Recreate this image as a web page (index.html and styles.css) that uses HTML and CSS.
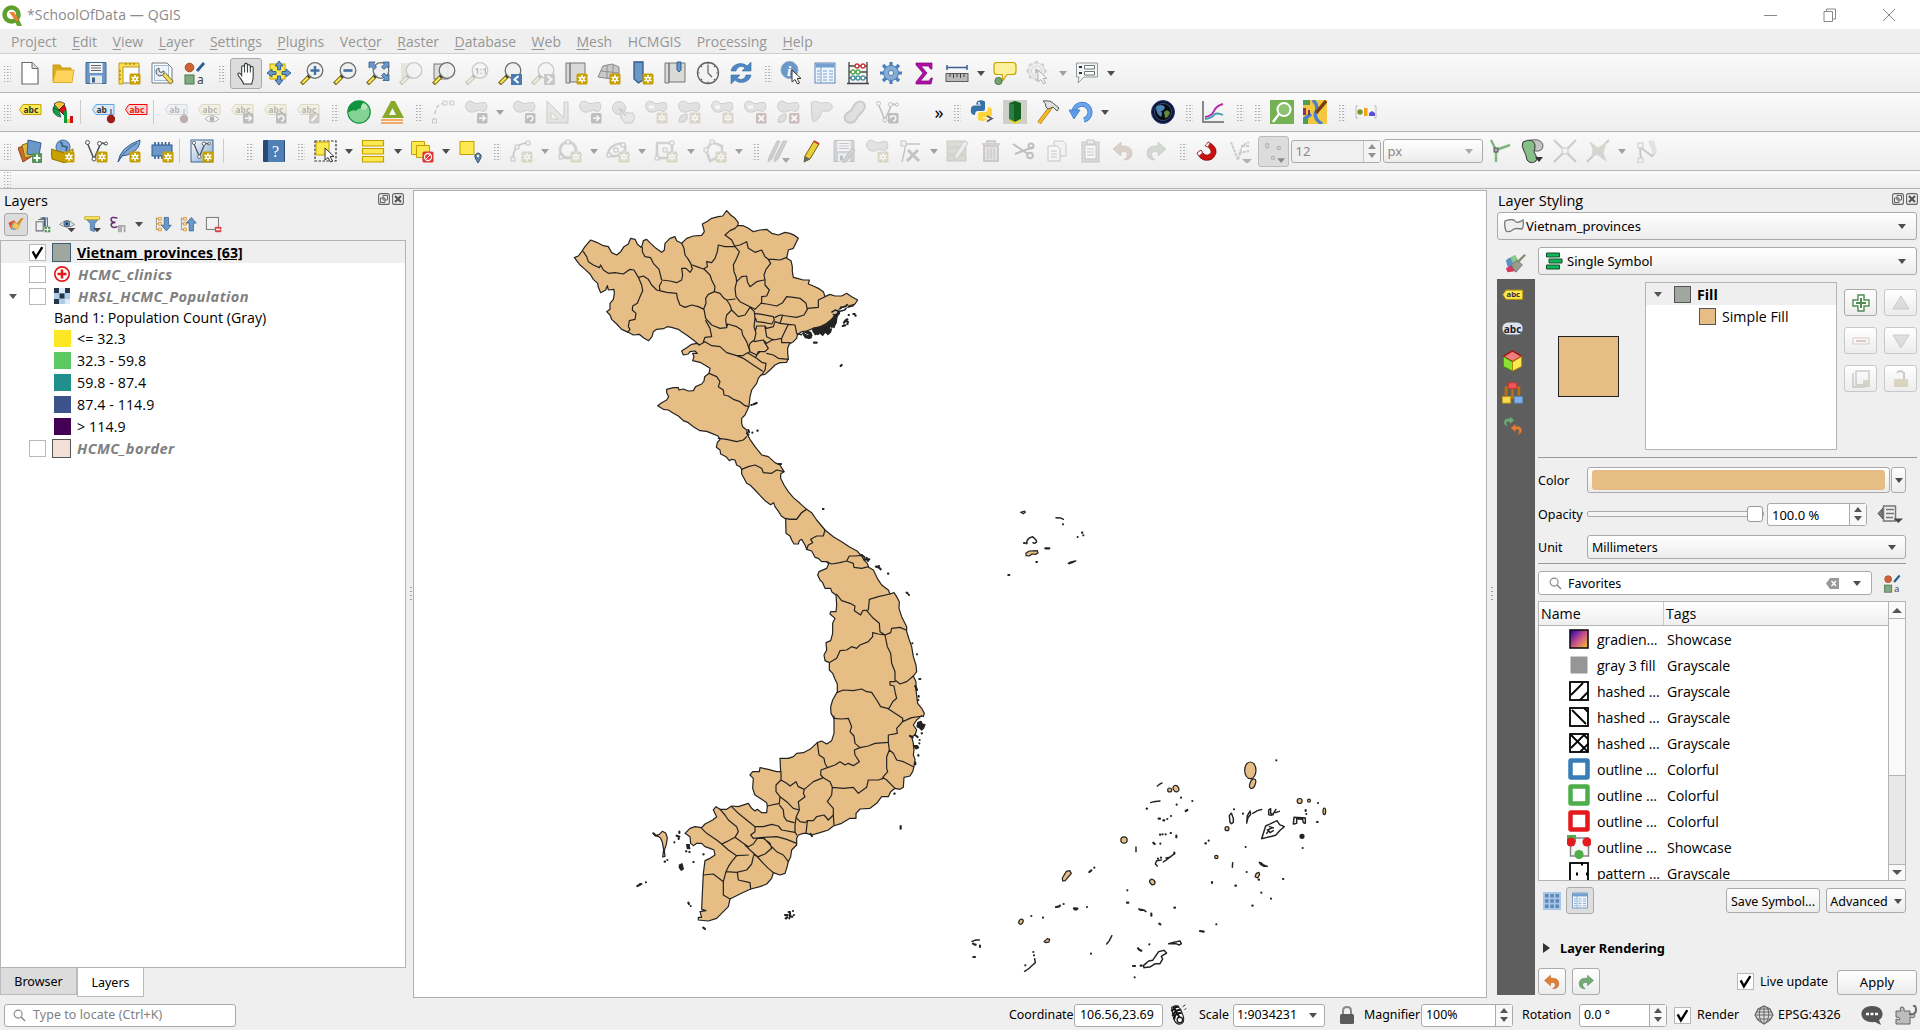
FILE: index.html
```html
<!DOCTYPE html>
<html lang="en">
<head>
<meta charset="utf-8">
<title>*SchoolOfData — QGIS</title>
<link rel="stylesheet" href="styles.css">
</head>
<body>
<svg class="grads" aria-hidden="true">
<defs>
<linearGradient id="gSteel" x1="0" y1="0" x2="1" y2="1"><stop offset="0" stop-color="#fff"/><stop offset="1" stop-color="#7fa6cf"/></linearGradient>
<linearGradient id="gMagma" x1="0" y1="0" x2="1" y2="1"><stop offset=".1" stop-color="#3a0ca8"/><stop offset=".5" stop-color="#c8508a"/><stop offset="1" stop-color="#fdc328"/></linearGradient>
</defs>
</svg>
<svg class="defs" aria-hidden="true">
<symbol id="badge" viewBox="0 0 24 24"><rect x="12.500" y="12.500" width="11" height="11" rx="1.500" fill="#c4a000"/><path d="M18 14v8M14.500 16l7 4M14.500 20l7-4" stroke="#fff" stroke-width="1.500"/><circle cx="18" cy="18" r="2.300" fill="#fff"/><circle cx="18" cy="18" r="1" fill="#c4a000"/></symbol>
<symbol id="xb" viewBox="0 0 24 24"><rect x="13" y="13" width="10.500" height="10.500" rx="1.500" fill="#d33a3a"/><path d="M15.500 15.500l5.500 5.500M21 15.500l-5.500 5.500" stroke="#fff" stroke-width="2"/></symbol>
<symbol id="gb" viewBox="0 0 24 24"><rect x="13" y="13" width="10.500" height="10.500" rx="1.500" fill="#555"/><path d="M15 18.200h6M18.500 15.500l2.700 2.700-2.700 2.700" stroke="#fff" stroke-width="1.600" fill="none"/></symbol>
<symbol id="rb" viewBox="0 0 24 24"><rect x="13" y="13" width="10.500" height="10.500" rx="1.500" fill="#555"/><path d="M16 17a2.600 2.600 0 1 1 2 4M15.500 18.500v-3" stroke="#fff" stroke-width="1.500" fill="none"/></symbol>
<symbol id="lens" viewBox="0 0 24 24"><path d="M9.500 15L1.500 23" stroke="#7a6a1c" stroke-width="4"/><path d="M8 16.500L2.500 22" stroke="#fce94f" stroke-width="2.200"/><path d="M10.500 13.500l-2 2.500" stroke="#222" stroke-width="3"/><circle cx="15" cy="9.500" r="7.800" fill="#eef1f1" fill-opacity=".9" stroke="#6c6f6f" stroke-width="1.300"/></symbol>
<symbol id="new" viewBox="0 0 24 24"><path d="M4 1.500h10l6 6v15.500H4z" fill="#fff" stroke="#6a6c6a" stroke-width="1.200"/><path d="M14 1.500v6h6" fill="#ddd" stroke="#6a6c6a"/></symbol>
<symbol id="open" viewBox="0 0 24 24"><path d="M2 20V4h7l2 3h9v3H5z" fill="#d9a91c" stroke="#c79a11"/><path d="M5 9h18l-2 12.500H2z" fill="#ffd45a" stroke="#e0ae25"/></symbol>
<symbol id="save" viewBox="0 0 24 24"><path d="M2 1.500h20v21H2z" fill="#6b98c8" stroke="#44698f"/><rect x="5.500" y="2" width="13" height="10" fill="#f4f6f4"/><path d="M7 4.500h10M7 7h10M7 9.500h10" stroke="#666"/><rect x="6" y="14.500" width="12" height="8" fill="#e6e9ea"/><rect x="8" y="16.500" width="3" height="5" fill="#3f618b"/></symbol>
<symbol id="layout" viewBox="0 0 24 24"><rect x="4" y="5" width="18" height="17" fill="#fff" stroke="#7a7f86"/><path d="M2 2h20v4H6v17H2z" fill="#fbdc54" stroke="#c09c16"/><path d="M9 2v2M13 2v2M17 2v2M2 10h2M2 14h2M2 18h2" stroke="#8c7010"/><use href="#badge"/></symbol>
<symbol id="lman" viewBox="0 0 24 24"><path d="M2 2h15l5 5v15H2z" fill="#fff" stroke="#777"/><rect x="4.500" y="4.500" width="14" height="15" fill="#f0f5fc" stroke="#9fbce0"/><path d="M14 13l8 9" stroke="#77691c" stroke-width="4.500"/><path d="M14 13l7.500 8.500" stroke="#f6dd60" stroke-width="3"/><path d="M9 7a4 4 0 1 0 5 3l-3 1.500-2-1.500z" fill="#ddd" stroke="#555"/></symbol>
<symbol id="style" viewBox="0 0 24 24"><circle cx="6.500" cy="6.500" r="4.300" fill="#cf6238" stroke="#a84c28"/><rect x="2" y="14" width="9" height="9" fill="#82aa82" stroke="#47764a"/><path d="M14 10l7-8" stroke="#2c5c94" stroke-width="2.800"/><text x="14" y="23" font-size="12" font-family="Noto Sans" fill="#444">a</text></symbol>
<symbol id="pan" viewBox="0 0 24 24"><path d="M7.500 14V5a1.600 1.600 0 0 1 3 0V2.500a1.600 1.600 0 0 1 3 0V4a1.600 1.600 0 0 1 3 0v2a1.500 1.500 0 0 1 3 .5V15c0 4-1 4.500-1.500 8H9.500c-.5-3-4-6-6-10 0-2 2-2.500 4 1z" fill="#fff" stroke="#2e3436" stroke-width="1.100"/><path d="M10.500 5v6M13.500 4v7M16.500 5v6" stroke="#2e3436"/></symbol>
<symbol id="panto" viewBox="0 0 24 24"><rect x="3" y="3" width="15" height="15" fill="#fce94f" stroke="#c4a000"/><path d="M12 0l4 5h-2.500v4h-3V5H8zM12 24l4-5h-2.500v-4h-3v4H8zM0 12l5-4v2.500h4v3H5V16zM24 12l-5-4v2.500h-4v3h4V16z" fill="#6b98c8" stroke="#2b5a8c" stroke-width=".9"/></symbol>
<symbol id="zin" viewBox="0 0 24 24"><use href="#lens"/><path d="M15 5v9M10.500 9.500h9" stroke="#44719f" stroke-width="2.400"/></symbol>
<symbol id="zout" viewBox="0 0 24 24"><use href="#lens"/><path d="M10.500 9.500h9" stroke="#44719f" stroke-width="2.600"/></symbol>
<symbol id="zfull" viewBox="0 0 24 24"><use href="#lens"/><path d="M3 1h6L7.500 3l3 3-2.500 2.500-3-3L3 7zM23 1h-6l1.500 2-3 3L18 8.500l3-3L23 7zM23 19.500h-6l1.500-2-3-3 2.500-2.500 3 3 2-1.500z" fill="#6b98c8" stroke="#2b5a8c" stroke-width=".8"/></symbol>
<symbol id="zsel" viewBox="0 0 24 24"><rect x="2" y="2" width="14" height="16" fill="#d8c46a"/><use href="#lens"/></symbol>
<symbol id="zlay" viewBox="0 0 24 24"><rect x="2" y="3" width="14" height="15" fill="#ddd" stroke="#777"/><use href="#lens"/></symbol>
<symbol id="z11" viewBox="0 0 24 24"><use href="#lens"/><text x="9.500" y="13" font-size="9" font-weight="bold" font-family="Noto Sans" fill="#444">1:1</text></symbol>
<symbol id="zlast" viewBox="0 0 24 24"><use href="#lens"/><rect x="13" y="13" width="11" height="11" fill="#4a7ab0"/><path d="M20.500 15l-4 3.500 4 3.500" stroke="#fff" stroke-width="2" fill="none"/></symbol>
<symbol id="znext" viewBox="0 0 24 24"><use href="#lens"/><rect x="13" y="13" width="11" height="11" fill="#777"/><path d="M16.500 15l4 3.500-4 3.500" stroke="#fff" stroke-width="2" fill="none"/></symbol>
<symbol id="nmap" viewBox="0 0 24 24"><path d="M2 2h4v20H2zM6 2h15v19H6z" fill="#d9dad8" stroke="#777"/><use href="#badge"/></symbol>
<symbol id="n3d" viewBox="0 0 24 24"><path d="M6 5l9-2 7 3v13L1 16z" fill="#c9cac8" stroke="#888"/><path d="M4 10l18 2M10 4v13M16 4v14" stroke="#909290" fill="none"/><use href="#badge"/></symbol>
<symbol id="bkn" viewBox="0 0 24 24"><path d="M4 1h9v18l-4.500 3L4 18z" fill="#6b98c8" stroke="#2b5a8c" stroke-width="1.300"/><use href="#badge"/></symbol>
<symbol id="bks" viewBox="0 0 24 24"><path d="M2 2h4v20H2zM6 2h16v19H6z" fill="#d9dad8" stroke="#777"/><path d="M14 1h4v8l-2 2-2-2z" fill="#6b98c8" stroke="#2b5a8c"/></symbol>
<symbol id="clock" viewBox="0 0 24 24"><circle cx="12" cy="12" r="10.500" fill="#f3f3f2" stroke="#5e6264" stroke-width="1.300"/><path d="M12 4v8l4 4M12 2v1.500M12 20.500V22M2 12h1.500M20.500 12H22M5 5l1 1M19 5l-1 1M5 19l1-1M19 19l-1-1" stroke="#5e6264" fill="none" stroke-width="1.200"/></symbol>
<symbol id="refresh" viewBox="0 0 24 24"><path d="M2 10C3 3 13 0 18 5l4-4v9h-9l3-3C12 4 8 6 7 10zM22 14c-1 7-11 10-16 5l-4 4v-9h9l-3 3c4 3 8 1 9-3z" fill="#4f87c2" stroke="#3b6da4" stroke-width=".6"/></symbol>
<symbol id="cursor" viewBox="0 0 24 24"><path d="M12 9v12l3-2.500 2.500 4.500 2-1-2.300-4.500H21z" fill="#fff" stroke="#333"/></symbol>
<symbol id="ident" viewBox="0 0 24 24"><circle cx="9.500" cy="9" r="8.500" fill="#6b98c8" stroke="#8aa9cb"/><text x="7" y="15" font-size="15" font-weight="bold" font-style="italic" font-family="Liberation Serif" fill="#fff">i</text><use href="#cursor"/></symbol>
<symbol id="table" viewBox="0 0 24 24"><rect x="2" y="2" width="20" height="20" fill="#eef4fb" stroke="#5d86b4"/><path d="M2.500 2.500h19v4h-19z" fill="#74a0d0"/><path d="M8 2v20M4 10h3M10 10h4M16 10h4M4 13h3M10 13h4M16 13h4M4 16h3M10 16h4M16 16h4M4 19h3M10 19h4M16 19h4" stroke="#74a0d0"/></symbol>
<symbol id="abacus" viewBox="0 0 24 24"><path d="M3 1v21M21 1v21M3 5h18M3 11h18M3 17h18M1 22.500h22" stroke="#444" stroke-width="1.300"/><g stroke-width="1.300" fill="#fff"><g stroke="#d03030"><circle cx="11" cy="5" r="2"/><circle cx="17" cy="5" r="2"/></g><g stroke="#4faa4f"><circle cx="7" cy="11" r="2"/><circle cx="12" cy="11" r="2"/></g><g stroke="#44909f"><circle cx="7" cy="17" r="2"/><circle cx="12" cy="17" r="2"/><circle cx="17" cy="17" r="2"/></g></g></symbol>
<symbol id="gear" viewBox="0 0 24 24"><path d="M12 1v22M1 12h22M4 4l16 16M20 4L4 20" stroke="#4b7fb8" stroke-width="3.200"/><circle cx="12" cy="12" r="7.500" fill="#86abd5" stroke="#4b7fb8"/><circle cx="12" cy="12" r="2.600" fill="#f5f5f5" stroke="#4b7fb8"/></symbol>
<symbol id="sigma" viewBox="0 0 24 24"><path d="M4 2h16v6h-1.500l-2-3H9l6 7-6.500 8H17l2-3h1.500L19 23H4v-2l7-9-7-8z" fill="#b40cab" stroke="#75086f" stroke-width=".7"/></symbol>
<symbol id="ruler" viewBox="0 0 24 24"><path d="M2 6.500h20M2 4v5M22 4v5" stroke="#3a618f" stroke-width="1.500"/><rect x="1" y="12.500" width="22" height="8" fill="#b9bab8" stroke="#5e6060"/><path d="M5 12v4M8.500 12v5M12 12v4M15.500 12v5M19 12v4" stroke="#444"/></symbol>
<symbol id="tip" viewBox="0 0 24 24"><path d="M4 1.500h16q3 0 3 3v6q0 3-3 3h-6l-4 6-1-6H4q-3 0-3-3v-6q0-3 3-3z" fill="#fdf09a" stroke="#c4a000" stroke-width="1.200"/><circle cx="5.500" cy="20" r="3.600" fill="#73a473" stroke="#467946"/></symbol>
<symbol id="act" viewBox="0 0 24 24"><path d="M10.500 0v20M.5 10h20M3.500 3l14 14M17.500 3l-14 14" stroke="#888" stroke-width="3.500"/><circle cx="10.500" cy="10" r="8" fill="#e4e4e4" stroke="#888"/><circle cx="10.500" cy="10" r="5" fill="#f4f4f4" stroke="#888"/><path d="M9 7l5 3-5 3z" fill="#555"/><use href="#cursor"/></symbol>
<symbol id="form" viewBox="0 0 24 24"><path d="M1.500 2h21v14H9l-6 6 1-6H1.500z" fill="#f2f5f5" stroke="#929a9c"/><path d="M4 6h3M4 12h3" stroke="#333" stroke-width="2"/><path d="M9.500 4.500h10v3.500h-10zM9.500 10.500h10V14h-10z" fill="#fff" stroke="#6d7577"/></symbol>
<symbol id="abc" viewBox="0 0 24 24"><path d="M5 4.500h18v10H5L1.500 9.500z" fill="#fce94f" stroke="#c4a000"/><text x="5.500" y="12.500" font-size="8.500" font-weight="bold" font-family="Noto Sans" fill="#333">abc</text></symbol>
<symbol id="abcr" viewBox="0 0 24 24"><path d="M5 4.500h18v10H5L1.500 9.500z" fill="#f7d4d4" stroke="#f00"/><text x="5.500" y="12.500" font-size="8.500" font-weight="bold" font-family="Noto Sans" fill="#e22">abc</text></symbol>
<symbol id="abpin" viewBox="0 0 24 24"><path d="M5 4.500h18v10H5L1.500 9.500z" fill="#d9e9f8" stroke="#62a5e4"/><text x="5.500" y="12.500" font-size="8.500" font-weight="bold" font-family="Noto Sans" fill="#333">ab</text><path d="M20 9v8" stroke="#889" stroke-width="2"/><circle cx="20" cy="19" r="4.200" fill="#9e1b1b"/></symbol>
<symbol id="abceye" viewBox="0 0 24 24"><use href="#abc"/><path d="M8 19q7-7 14 0-7 6-14 0z" fill="#fff" stroke="#444"/><circle cx="15" cy="19" r="2.400" fill="#333"/></symbol>
<symbol id="abcmove" viewBox="0 0 24 24"><use href="#abc"/><use href="#gb"/></symbol>
<symbol id="abcrot" viewBox="0 0 24 24"><use href="#abc"/><use href="#rb"/></symbol>
<symbol id="abced" viewBox="0 0 24 24"><use href="#abc"/><rect x="13" y="13" width="10.500" height="10.500" rx="1.500" fill="#8a8050"/><path d="M15.500 21l5-5.500" stroke="#fff" stroke-width="2"/></symbol>
<symbol id="pie" viewBox="0 0 24 24"><path d="M8 10V2A8 8 0 0 0 3 13z" fill="#16a045" stroke="#144"/><path d="M8 10L3 4a8 8 0 0 1 11 0z" fill="#fcc53c" stroke="#553"/><path d="M8 10l5-5a8 8 0 0 1 0 10z" fill="#d11" stroke="#422"/><path d="M2 8l6 2 2 7a8 8 0 0 1-8-9z" fill="#16a045" stroke="#144" stroke-width=".6"/><path d="M13 11h3v12h-3z" fill="#0a9a3a"/><path d="M16 19h3v4h-3z" fill="#fb3"/><path d="M19 16h3v7h-3z" fill="#c11"/></symbol>
<symbol id="ball" viewBox="0 0 24 24"><circle cx="12" cy="12" r="11.200" fill="#85d295" stroke="#169142" stroke-width="1.200"/><path d="M1 12C1 3 10-1 17 2c-3 1-1 5-3 6s-4 1-5 3c-3-2-5 1-8 1z" fill="#10923e"/><circle cx="17" cy="7" r="3" fill="#b5e7bd"/></symbol>
<symbol id="tri" viewBox="0 0 24 24"><path d="M11 1h4l9 17H2z" fill="#88a92a"/><path d="M12.500 8l3.500 7H9z" fill="#f5f5f5"/><path d="M1 20h22M1 23h22" stroke="#f5923a" stroke-width="1.600"/></symbol>
<symbol id="blob" viewBox="0 0 24 24"><path d="M2 8C0 2 6-1 10 3c4 2 8-2 12 0 2 4 0 10-4 8-5-2-7 2-11 1C4 12 3 10 2 8z" fill="#b9bcb9" stroke="#777"/></symbol>
<symbol id="bmv" viewBox="0 0 24 24"><use href="#blob"/><use href="#gb"/></symbol>
<symbol id="brot" viewBox="0 0 24 24"><use href="#blob"/><use href="#rb"/></symbol>
<symbol id="badd" viewBox="0 0 24 24"><use href="#blob"/><path d="M5 7h5" stroke="#fff" stroke-width="3"/><use href="#badge"/></symbol>
<symbol id="bpart" viewBox="0 0 24 24"><use href="#blob"/><path d="M2 22q0-8 8-8v5q-2 4-8 3z" fill="#b9bcb9" stroke="#777"/><use href="#badge"/></symbol>
<symbol id="bdel" viewBox="0 0 24 24"><use href="#blob"/><path d="M5 7h5" stroke="#fff" stroke-width="3"/><use href="#xb"/></symbol>
<symbol id="bpdel" viewBox="0 0 24 24"><use href="#blob"/><path d="M2 22q0-8 8-8v5q-2 4-8 3z" fill="#b9bcb9" stroke="#777"/><use href="#xb"/></symbol>
<symbol id="resh" viewBox="0 0 24 24"><path d="M2 3c5-4 8 1 12 0s8-1 9 3-4 6-8 5c-4 0-2 4-5 7s-6 6-7 0z" fill="#b9bcb9" stroke="#777"/></symbol>
<symbol id="offc" viewBox="0 0 24 24"><path d="M14 3c5-4 11 1 8 6-2 5-5 4-7 9s-8 6-11 3 0-8 3-9 4-6 7-9z" fill="#b9bcb9" stroke="#777" stroke-width="2"/></symbol>
<symbol id="simp" viewBox="0 0 24 24"><circle cx="8" cy="8" r="6.500" fill="#b9bcb9" stroke="#777"/><path d="M10 9l6 4h6l2 5-3 5h-7l-4-5z" fill="#ccd2d6" stroke="#778" stroke-width="1"/><path d="M8 8l7 8" stroke="#444"/></symbol>
<symbol id="sq" viewBox="0 0 24 24"><path d="M2 1v22h21V2h-4v16z" fill="#d5c9a9" stroke="#777"/><path d="M6 12v7h7z" fill="#f4f4f4" stroke="#888"/></symbol>
<symbol id="adv" viewBox="0 0 24 24"><path d="M3 22v-4M4 14q1-10 10-11M18 3h4" stroke="#777" stroke-width="1.500" stroke-dasharray="4 2" fill="none"/><path d="M1.500 19h4v4h-4zM12 1h4v4h-4zM19 1h4v4h-4z" fill="#eee" stroke="#777"/></symbol>
<symbol id="vee" viewBox="0 0 24 24"><path d="M3.500 4.500L10 20l6-14q3-4 5 0" stroke="#4a5558" stroke-width="1.500" fill="none"/><g fill="#fff" stroke="#4a5558"><circle cx="3.500" cy="3.500" r="2"/><circle cx="10" cy="20" r="2"/><circle cx="15.500" cy="4.500" r="2"/><circle cx="22" cy="4.500" r="1.500"/></g></symbol>
<symbol id="nvec" viewBox="0 0 24 24"><use href="#vee"/><use href="#badge"/></symbol>
<symbol id="vmix" viewBox="0 0 24 24"><use href="#vee"/><use href="#rb"/></symbol>
<symbol id="py" viewBox="0 0 24 24"><path d="M7 1.500q4-2.500 8 0V9q0 2-2 2H8q-3 0-3 4-5 0-4-6 0-3 3-3.500h7V4.500H6z" fill="#3572a5"/><path d="M16 20q-4 2.500-8-.5V14q0-2 2-2h5q3 0 3-5 5 0 4 6 0 4-3 4h-6v1.500h4z" fill="#ffd43b"/><circle cx="9" cy="3" r="1" fill="#fff"/><path d="M17 16l5 2.500-5 3" stroke="#555" stroke-width="1.500" fill="none"/></symbol>
<symbol id="gcube" viewBox="0 0 24 24"><rect x="0" y="0" width="24" height="24" fill="#ccd0c8"/><path d="M6 3l6-2 6 2v16l-6 3-6-3z" fill="#14611f"/><path d="M6 3l5 1.500v17L6 19z" fill="#2a8048"/><path d="M6 19l6 3 6-3v2l-6 3-6-3z" fill="#e7d030"/></symbol>
<symbol id="hammer" viewBox="0 0 24 24"><path d="M15 7L3 23" stroke="#b8790c" stroke-width="4"/><path d="M15 7L3 23" stroke="#f4bc2c" stroke-width="2.600"/><path d="M7 1q8-1 11 3l5 4-2 3-4-4-5 2-2-2q0-4-3-6z" fill="#e0e0e0" stroke="#555"/></symbol>
<symbol id="undob" viewBox="0 0 24 24"><path d="M5 12A8 8 0 1 1 15 20" stroke="#3d77c8" stroke-width="5" fill="none"/><path d="M5 12A8 8 0 1 1 15 20" stroke="#6aa6ee" stroke-width="3.600" fill="none"/><path d="M0 10h11l-6 9z" fill="#5b9be8" stroke="#3d77c8" stroke-width=".8"/></symbol>
<symbol id="earth" viewBox="0 0 24 24"><circle cx="12" cy="12" r="11.500" fill="#0d1433" stroke="#2b3c80"/><circle cx="12" cy="12" r="8.500" fill="#08090f" stroke="#5575aa" stroke-width=".6"/><path d="M5 7q5-4 9 0-1 4-4 4 2 3 0 6-5-3-5-10z" fill="#4a84b4"/><path d="M13 12q4-4 6 1-2 5-5 5z" fill="#5f8c45"/></symbol>
<symbol id="chart" viewBox="0 0 24 24"><path d="M2 1v21h21" stroke="#666" stroke-width="1.500" fill="none"/><path d="M4 17q7-1 9-6t9-7" stroke="#b32aa8" stroke-width="2" fill="none"/><path d="M4 19q7-1 9-4t9 0" stroke="#3aa0ac" stroke-width="1.800" fill="none"/></symbol>
<symbol id="qms" viewBox="0 0 24 24"><rect width="24" height="24" fill="#74b152"/><path d="M9 14L3 22" stroke="#fff" stroke-width="2.500"/><circle cx="14" cy="9.500" r="6.500" fill="#8ec471" stroke="#fff" stroke-width="2"/></symbol>
<symbol id="osm" viewBox="0 0 24 24"><rect width="24" height="24" fill="#f5c63f"/><path d="M10 0q6 6 3 12t6 12M0 20l8-6" stroke="#4a80cc" stroke-width="3.500" fill="none"/><path d="M0 0h7v5H0zM0 19h5v5H0z" fill="#4c9e57"/><path d="M0 8h3v7H0zM5 10h2v5H5z" fill="#8c3060"/><path d="M23 1L13 13" stroke="#7b3b10" stroke-width="3.500"/></symbol>
<symbol id="dplot" viewBox="0 0 24 24"><path d="M4 6H2v12h2M20 6h2v12h-2" stroke="#bbb" fill="none"/><circle cx="6" cy="12" r="2.700" fill="#6f9d25"/><rect x="10" y="8" width="3.500" height="8" fill="#f6a21c"/><path d="M15 16v-3l3-2 3 2v3z" fill="#5b50d6"/></symbol>
<symbol id="dsm" viewBox="0 0 24 24"><path d="M0 9l12-5 4 12-11 7z" fill="#cf6a28" stroke="#8d431a"/><path d="M4 6l12-4 2 14-11 3z" fill="#ddbb40" stroke="#8d6b1a"/><path d="M10 1l13 3-2 13-12-2z" fill="#6b98c8" stroke="#355f8e"/><rect x="14" y="14" width="10" height="10" rx="1" fill="#56915a"/><path d="M19 15.500v7M15.500 19h7" stroke="#fff" stroke-width="2"/></symbol>
<symbol id="gpkg" viewBox="0 0 24 24"><circle cx="12" cy="8" r="7" fill="#7da6d4" stroke="#44709f"/><path d="M9 3q3 1 2 4l5 1-1 4" stroke="#33587f" stroke-width="1.500" fill="none"/><path d="M0 10l14 4v10L1 20z" fill="#c8a000" stroke="#8d7000"/><path d="M14 14l8-4v9l-8 5z" fill="#f5df55" stroke="#8d7000"/><use href="#badge"/></symbol>
<symbol id="feather" viewBox="0 0 24 24"><path d="M1 23Q3 8 23 1q0 8-7 12-6 4-11 4z" fill="#7fa8d4" stroke="#35608f"/><path d="M1 23Q7 11 20 4" stroke="#35608f" fill="none"/><use href="#badge"/></symbol>
<symbol id="chip" viewBox="0 0 24 24"><path d="M5 3v17M8.500 3v17M12 3v17M15.500 3v17M19 3v17" stroke="#2b5a8c" stroke-width="1.500"/><rect x="2" y="6" width="20" height="11" fill="#6b98c8" stroke="#2b5a8c"/><use href="#badge"/></symbol>
<symbol id="virt" viewBox="0 0 24 24"><rect x="1" y="1" width="22" height="22" fill="url(#gSteel)" stroke="#3d6690"/><use href="#vee" x="1" y="1" width="20" height="20"/><use href="#badge"/></symbol>
<symbol id="book" viewBox="0 0 24 24"><rect x="1" y="1" width="22" height="22" rx="1" fill="#274a75"/><rect x="6" y="1" width="16" height="22" fill="#4f7fb5"/><text x="10" y="18" font-size="16" font-family="Liberation Serif" fill="#fff">?</text></symbol>
<symbol id="sel" viewBox="0 0 24 24"><rect x="2" y="2" width="21" height="20" fill="none" stroke="#333" stroke-width="1.200" stroke-dasharray="2.500 1.500"/><rect x="3" y="3" width="13" height="13" fill="#fce94f" stroke="#c4a000"/><use href="#cursor"/></symbol>
<symbol id="selv" viewBox="0 0 24 24"><path d="M1.500 1.500h21v5.500h-21zM1.500 9.500h21V15h-21zM1.500 17.500h21V23h-21z" fill="#fce94f" stroke="#c4a000" stroke-width="1.200"/></symbol>
<symbol id="desel" viewBox="0 0 24 24"><path d="M1.500 2.500h13v13h-13z" fill="#fce94f" stroke="#c4a000"/><path d="M6.500 6.500h13v12h-13z" fill="#fce94f" stroke="#c4a000"/><rect x="12.500" y="12.500" width="11" height="11" rx="1.500" fill="#d33"/><circle cx="18" cy="18" r="3.500" fill="none" stroke="#fff" stroke-width="1.300"/><path d="M15.500 20.500l5-5" stroke="#fff"/></symbol>
<symbol id="selloc" viewBox="0 0 24 24"><rect x="2" y="2.500" width="14" height="13" fill="#fce94f" stroke="#c4a000"/><path d="M20 24q-4-6-3-8 3-4 6 0 1 2-3 8z" fill="#5a84a8" stroke="#456"/><circle cx="20" cy="17" r="1.200" fill="#fff"/></symbol>
<symbol id="curve" viewBox="0 0 24 24"><path d="M4 20Q4 5 18 4" stroke="#666" stroke-width="1.600" fill="none"/><path d="M2 18h4v4H2zM17 2h4v4h-4zM6 6h4v4H6z" fill="#eee" stroke="#666"/><use href="#badge"/></symbol>
<symbol id="circ" viewBox="0 0 24 24"><circle cx="10" cy="11" r="8" fill="none" stroke="#888" stroke-width="3"/><path d="M8 1h4v4H8zM1 16h4v4H1z" fill="#eee" stroke="#666"/><use href="#badge"/></symbol>
<symbol id="ell" viewBox="0 0 24 24"><ellipse cx="11" cy="11" rx="9" ry="5.500" transform="rotate(-25 11 11)" fill="none" stroke="#888" stroke-width="2.500"/><path d="M8 9h4v4H8zM1 14h4v4H1zM15 4h4v4h-4z" fill="#eee" stroke="#666"/><use href="#badge"/></symbol>
<symbol id="rec" viewBox="0 0 24 24"><path d="M3 4h15v15H3z" fill="none" stroke="#888" stroke-width="2.500"/><path d="M9 9h4v4H9zM16 2h4v4h-4zM1 17h4v4H1z" fill="#eee" stroke="#777"/><use href="#badge"/></symbol>
<symbol id="poly" viewBox="0 0 24 24"><path d="M3 11l6-8 10 4 0 9-12 6z" fill="none" stroke="#888" stroke-width="2.500"/><path d="M1 9h4v4H1zM7 1h4v4H7z" fill="#eee" stroke="#777"/><use href="#badge"/></symbol>
<symbol id="pencils" viewBox="0 0 24 24"><path d="M3 18L11 2h3L6 20l-4 3zM9 18L17 2h4L12 20l-4 3z" fill="#9a8078" stroke="#666"/><path d="M16 19h8l-4 5z" fill="#111"/></symbol>
<symbol id="pencil" viewBox="0 0 24 24"><path d="M6 17L15 2l5 3-9 15-6 3z" fill="#e8cf35" stroke="#76600e"/><path d="M15 2l5 3" stroke="#c33" stroke-width="2"/><path d="M6 17l5 3-6 3z" fill="#666"/></symbol>
<symbol id="saveed" viewBox="0 0 24 24"><use href="#save"/><path d="M12 20l8-11 3 2-8 11-4 2z" fill="#a88" stroke="#666"/></symbol>
<symbol id="baf" viewBox="0 0 24 24"><use href="#blob"/><use href="#badge"/></symbol>
<symbol id="vtx" viewBox="0 0 24 24"><path d="M4 23L8 5h14" stroke="#666" fill="none" stroke-width="1.400"/><path d="M3 2h5v5H3z" fill="#eee" stroke="#666"/><path d="M9 22L20 11M10 11l11 11" stroke="#666" stroke-width="3"/></symbol>
<symbol id="multi" viewBox="0 0 24 24"><path d="M1 2h19v6H1zM1 9h19v6H1zM1 16h19v6H1z" fill="#b5a960" stroke="#776"/><path d="M9 16L18 2l4 2-9 14-5 3z" fill="#ddd" stroke="#777"/></symbol>
<symbol id="trash" viewBox="0 0 24 24"><path d="M3 5h18M8 4V2h8v2M5 7h14v15H5z" stroke="#855" stroke-width="1.600" fill="#cbb"/><path d="M9 9v11M12 9v11M15 9v11" stroke="#855"/></symbol>
<symbol id="cut" viewBox="0 0 24 24"><path d="M1 5l15 10M3 15l18-7" stroke="#555" stroke-width="2"/><circle cx="19" cy="7" r="2.500" fill="none" stroke="#555" stroke-width="2"/><circle cx="18" cy="16.500" r="2.800" fill="none" stroke="#555" stroke-width="2"/></symbol>
<symbol id="copy" viewBox="0 0 24 24"><path d="M9 2h9l3 3v12H9z" fill="#eee" stroke="#777"/><path d="M3 7h9l3 3v12H3z" fill="#fff" stroke="#666"/><path d="M6 12h6M6 15h6M6 18h6" stroke="#666"/></symbol>
<symbol id="paste" viewBox="0 0 24 24"><rect x="4" y="3" width="17" height="20" fill="#aaa" stroke="#666"/><path d="M7 6h11v14H7z" fill="#fff" stroke="#666"/><path d="M9 10h7M9 13h7M9 16h7" stroke="#666"/><rect x="9" y="1" width="7" height="4" fill="#ddd" stroke="#666"/></symbol>
<symbol id="undo" viewBox="0 0 24 24"><path d="M10 3L2 10l8 7v-4q8-2 6 5l-3 3q8 0 8-7 0-8-11-7z" fill="#e27d36" stroke="#b85e22" stroke-width=".7"/></symbol>
<symbol id="redo" viewBox="0 0 24 24"><path d="M14 3l8 7-8 7v-4q-8-2-6 5l3 3q-8 0-8-7 0-8 11-7z" fill="#73a977" stroke="#4c8251" stroke-width=".7"/></symbol>
<symbol id="magnet" viewBox="0 0 24 24"><path d="M13 3q9 4 8 11-3 9-12 7-4-1-7-7l4-3q3 6 7 5 5-2 2-6-1-2-4-3z" fill="#cc1010" stroke="#700" stroke-width=".7"/><path d="M13 3l-3 4 3 1 2-4zM2 14l4-3 1.500 3L4 17z" fill="#fff" stroke="#933" stroke-width=".8"/></symbol>
<symbol id="vmany" viewBox="0 0 24 24"><path d="M3 3l7 18 4-14 7-4M14 7h8M11 14l10-2" stroke="#777" stroke-width="2" fill="none" stroke-dasharray="3 1"/><path d="M14 20h10l-5 5z" fill="#333"/></symbol>
<symbol id="dots" viewBox="0 0 24 24"><path d="M4 4h3v4H4zM16 7h3v3h-3zM10 17h3v3h-3z" fill="#ddd" stroke="#aaa"/><path d="M16 19h8l-4 5z" fill="#888"/></symbol>
<symbol id="topo" viewBox="0 0 24 24"><path d="M4 1l5 10v12M9 11l14-5" stroke="#7cb77e" stroke-width="2.400" fill="none"/><rect x="7" y="9" width="4" height="4" fill="#aaa" stroke="#555"/></symbol>
<symbol id="foot" viewBox="0 0 24 24"><path d="M7 2q14-4 16 4 0 7-8 6z" fill="#c4c6c4" stroke="#666"/><path d="M3 3q10-5 12 3 0 4-1 7 4 6 2 9-5 4-9-1-1-6-3-9-3-5-1-9z" fill="#86bf87" stroke="#333"/><path d="M15 18h8l-4 5z" fill="#333"/></symbol>
<symbol id="ix" viewBox="0 0 24 24"><path d="M1 1l22 22M23 1L1 23" stroke="#777" stroke-width="2"/><rect x="9" y="9" width="6" height="6" fill="#eee" stroke="#777"/></symbol>
<symbol id="ix2" viewBox="0 0 24 24"><path d="M23 1L1 23" stroke="#777" stroke-width="2"/><path d="M4 3l8 6 8-5-3 10 3 8-9-7-5 3 1-8z" fill="#a95" stroke="#998"/></symbol>
<symbol id="trace" viewBox="0 0 24 24"><path d="M7 22l-1-14 12 9 4-5" stroke="#777" stroke-width="2" fill="none"/><path d="M4 4h5v5H4zM4 19h5v5H4z" fill="#eee" stroke="#777"/><path d="M14 2l6-1 3 12-3 4z" fill="#cb9"/></symbol>
<symbol id="brush" viewBox="0 0 24 24"><path d="M0 9l9-4 4 6-5 9-5-2z" fill="#e24a3a"/><path d="M4 13l5-5 5 3-3 10-7-1z" fill="#6da3dc"/><path d="M8 8l10 5-3 7-9-3z" fill="#f3c84e" stroke="#c78f22" stroke-width=".6"/><path d="M13 10l8-9 3 1-7 11z" fill="#d98c28"/></symbol>
<symbol id="brush2" viewBox="0 0 24 24"><path d="M3 8l9-5 5 8-8 6z" fill="#8bc98a"/><path d="M2 9l5-3 4 9-6 5z" fill="#5b8fc8"/><path d="M2 18l7-4 3 7-8 1z" fill="#d33a5d"/><path d="M8 14l6-5 6 5-7 8z" fill="#9a9c8a" stroke="#777"/><path d="M15 11l8-8" stroke="#8b8b78" stroke-width="2.600"/></symbol>
<symbol id="addgrp" viewBox="0 0 24 24"><path d="M3 8h10v13H3zM6 5h10v13M9 3h10v13" fill="none" stroke="#6d7072" stroke-width="1.500"/><path d="M12 4q3-4 3 2v9" stroke="#3b6694" stroke-width="2" fill="none"/><rect x="15" y="15" width="8" height="8" fill="#5b9a60"/><path d="M19 16v6M16 19h6" stroke="#fff" stroke-width="1.500"/></symbol>
<symbol id="eye" viewBox="0 0 24 24"><path d="M1 12Q11 1 22 12 12 19 1 12z" fill="#eee" stroke="#777" stroke-width="1.200"/><circle cx="11" cy="11" r="4.300" fill="#6f9bcc" stroke="#345"/><circle cx="11" cy="11" r="1.700" fill="#123"/><path d="M12 17h11l-5.500 6z" fill="#444"/></symbol>
<symbol id="filter" viewBox="0 0 24 24"><path d="M1 2h21l-7 9v11l-6-2v-9z" fill="#6b98c8" stroke="#446f9e"/><path d="M1 1h21v4H1z" fill="#fce94f" stroke="#b59d1a"/><path d="M13 17h11l-5.500 6z" fill="#444"/></symbol>
<symbol id="eps" viewBox="0 0 24 24"><path d="M12 3Q2 0 3 6q1 3 6 3-6 0-6 4 1 5 9 2" stroke="#6a2b72" stroke-width="2.200" fill="none"/><path d="M14 23V14h8v9M17 14v9" stroke="#aaa" stroke-width="2.600" fill="none"/></symbol>
<symbol id="expd" viewBox="0 0 24 24"><path d="M2 2v18M2 4h6M2 11h6M2 19h6" stroke="#999" stroke-width="1.400"/><path d="M5 2h4v4H5zM5 9h4v4H5zM5 17h4v4H5z" fill="#fce0a0" stroke="#e08a18"/><path d="M13 2h6v11h4l-7 8-7-8h4z" fill="#6b98c8" stroke="#2b5a8c"/></symbol>
<symbol id="coll" viewBox="0 0 24 24"><path d="M2 2v18M2 4h6M2 11h6M2 19h6" stroke="#999" stroke-width="1.400"/><path d="M5 2h4v4H5zM5 9h4v4H5zM5 17h4v4H5z" fill="#fce0a0" stroke="#e08a18"/><path d="M13 21h6V10h4l-7-8-7 8h4z" fill="#6b98c8" stroke="#2b5a8c"/></symbol>
<symbol id="rem" viewBox="0 0 24 24"><rect x="2" y="2" width="17" height="17" fill="#f3f3f3" stroke="#777" stroke-width="1.400"/><rect x="14" y="15" width="9" height="8" rx="1" fill="#df4444"/><path d="M15.500 19h6" stroke="#fff" stroke-width="2"/></symbol>
<symbol id="float" viewBox="0 0 12 12"><rect x=".6" y=".6" width="10.800" height="10.800" rx="2" fill="#eee" stroke="#666" stroke-width="1.100"/><path d="M5 2.500h4.500v4.500H5zM2.500 5H7v4.500H2.500z" fill="#eee" stroke="#666"/></symbol>
<symbol id="close" viewBox="0 0 12 12"><rect x=".6" y=".6" width="10.800" height="10.800" rx="2" fill="#eee" stroke="#666" stroke-width="1.100"/><path d="M3 3l6 6M9 3L3 9" stroke="#555" stroke-width="2.200"/></symbol>
<symbol id="cube" viewBox="0 0 24 24"><path d="M2 7l10-6 10 6-10 6z" fill="#ef7e7e" stroke="#a11" stroke-width="1.500"/><path d="M2 7l10 6v10L2 18z" fill="#8ae234" stroke="#480"/><path d="M22 7l-10 6v10l10-5z" fill="#fce94f" stroke="#a80"/></symbol>
<symbol id="diag" viewBox="0 0 24 24"><path d="M12 6v10M5 15V6h14v9M10 17h4" stroke="#b9700e" stroke-width="3" fill="none"/><rect x="7.500" y="1" width="9" height="6" fill="#ef5757" stroke="#c33"/><rect x="1" y="16" width="9" height="7" fill="#f8dc50" stroke="#c39b15"/><rect x="14" y="16" width="9" height="7" fill="#7fb0ea" stroke="#5a88bd"/></symbol>
<symbol id="hist" viewBox="0 0 24 24"><g transform="translate(1 1) scale(.58)"><use href="#redo" width="24" height="24"/></g><g transform="translate(9 9) scale(.62)"><use href="#undo" width="24" height="24"/></g></symbol>
<symbol id="mask" viewBox="0 0 24 24"><rect x="1" y="5" width="22" height="13" rx="6" fill="#dce3f3"/><text x="2.500" y="16" font-size="11" font-weight="bold" font-family="Open Sans" fill="#222">abc</text></symbol>
<symbol id="search" viewBox="0 0 14 14"><circle cx="5.500" cy="5.500" r="4.300" fill="none" stroke="#888" stroke-width="1.200"/><path d="M8.700 8.700l4.300 4.300" stroke="#888" stroke-width="1.500"/></symbol>
<symbol id="check" viewBox="0 0 14 14"><path d="M2.500 6l3 5.500L11.500 2" fill="none" stroke="#000" stroke-width="2.200"/></symbol>
<symbol id="extent" viewBox="0 0 20 24"><path d="M3 4q5-5 10 2l3 8q1 8-4 8-5 0-7-7z" fill="#fff" stroke="#222" stroke-width="1.200"/><path d="M5 3l8 14M3 8q4-6 8-5M4 13q4-8 9-6M6 17q0-8 8-7" stroke="#111" stroke-width="2.200" fill="none"/><circle cx="12" cy="17.500" r="3" fill="#fff" stroke="#222" stroke-width="1.500"/><path d="M15 3l3-2M17 6l2-1" stroke="#222"/></symbol>
<symbol id="lock" viewBox="0 0 16 20"><path d="M4 9V6q0-4 4-4t4 4v3" stroke="#888" stroke-width="2" fill="none"/><rect x="1" y="9" width="14" height="10" rx="1.500" fill="#5a5a5a"/></symbol>
<symbol id="globe" viewBox="0 0 20 20"><path d="M4 4l6-3 6 3 3 6-3 5-6 4-6-4-3-5z" fill="#ddd" stroke="#666" stroke-width="1.200"/><path d="M1 10h18M4 4h12M3 14h14M10 1v18M7 2q-4 8 1 16M13 2q4 8-1 16M2 7h16" stroke="#666" fill="none"/></symbol>
<symbol id="bubble" viewBox="0 0 22 20"><path d="M11 1c12 0 13 11 7 14l2 5-6-3C-3 19-4 1 11 1z" fill="#555"/><path d="M5 9h3M9.500 9h3M14 9h3" stroke="#fff" stroke-width="2.500"/></symbol>
<symbol id="puzzle" viewBox="0 0 22 20"><path d="M1 6h5q-2-4 1-4t2 4h6v4q5-2 5 1-1 3-5 1v7H1v-5q4 2 4 0t-4-2z" fill="#bdbdbd" stroke="#666"/><path d="M14 9q7 1 7-4t-3-4" stroke="#666" stroke-width="2" fill="none"/></symbol>
</svg>

<header class="titlebar">
<svg class="logo" viewBox="0 0 20 22"><circle cx="9.500" cy="10.500" r="7" fill="none" stroke="#5d9e2c" stroke-width="4.500"/><path d="M10 10l6 3 4 9h-5z" fill="#69a32c"/><path d="M7 8h5l5 8-3 1z" fill="#ee7f33"/></svg>
<span class="wtitle">*SchoolOfData — QGIS</span>
<div class="winbtns"><svg viewBox="0 0 14 18"><path d="M0 9.500h13" stroke="#888"/></svg><svg viewBox="0 0 14 18"><path d="M1 5.500h8.500v10H1zM3.500 5V3h9v10H10" fill="none" stroke="#888"/></svg><svg viewBox="0 0 14 18"><path d="M1 3l12 12M13 3L1 15" stroke="#888"/></svg></div>
</header>
<nav class="menubar"><span>Pro<u>j</u>ect</span><span><u>E</u>dit</span><span><u>V</u>iew</span><span><u>L</u>ayer</span><span><u>S</u>ettings</span><span><u>P</u>lugins</span><span>Vect<u>o</u>r</span><span><u>R</u>aster</span><span><u>D</u>atabase</span><span><u>W</u>eb</span><span><u>M</u>esh</span><span>HCMGIS</span><span>Pro<u>c</u>essing</span><span><u>H</u>elp</span></nav>

<div class="bar">
<i class="hd first"></i><svg class="i"><use href="#new"/></svg><svg class="i"><use href="#open"/></svg><svg class="i"><use href="#save"/></svg><svg class="i"><use href="#layout"/></svg><svg class="i"><use href="#lman"/></svg><svg class="i"><use href="#style"/></svg><i class="hd"></i><svg class="i on"><use href="#pan"/></svg><svg class="i"><use href="#panto"/></svg><svg class="i"><use href="#zin"/></svg><svg class="i"><use href="#zout"/></svg><svg class="i"><use href="#zfull"/></svg><svg class="i off"><use href="#zsel"/></svg><svg class="i"><use href="#zlay"/></svg><svg class="i off"><use href="#z11"/></svg><svg class="i"><use href="#zlast"/></svg><svg class="i off"><use href="#znext"/></svg><svg class="i"><use href="#nmap"/></svg><svg class="i"><use href="#n3d"/></svg><svg class="i"><use href="#bkn"/></svg><svg class="i"><use href="#bks"/></svg><svg class="i"><use href="#clock"/></svg><svg class="i"><use href="#refresh"/></svg><i class="hd"></i><svg class="i"><use href="#ident"/></svg><svg class="i"><use href="#table"/></svg><svg class="i"><use href="#abacus"/></svg><svg class="i"><use href="#gear"/></svg><svg class="i"><use href="#sigma"/></svg><svg class="i"><use href="#ruler"/></svg><b class="dd"></b><svg class="i"><use href="#tip"/></svg><svg class="i off"><use href="#act"/></svg><b class="dd dim"></b><svg class="i"><use href="#form"/></svg><b class="dd"></b>
</div>
<div class="bar">
<i class="hd first"></i><svg class="i"><use href="#abc"/></svg><svg class="i"><use href="#pie"/></svg><i class="sep"></i><svg class="i"><use href="#abpin"/></svg><svg class="i"><use href="#abcr"/></svg><i class="sep"></i><svg class="i off"><use href="#abpin"/></svg><svg class="i off"><use href="#abceye"/></svg><svg class="i off"><use href="#abcmove"/></svg><svg class="i off"><use href="#abcrot"/></svg><svg class="i off"><use href="#abced"/></svg><i class="hd"></i><svg class="i"><use href="#ball"/></svg><svg class="i"><use href="#tri"/></svg><i class="hd"></i><svg class="i off"><use href="#adv"/></svg><svg class="i off"><use href="#bmv"/></svg><b class="dd dim"></b><svg class="i off"><use href="#brot"/></svg><svg class="i off"><use href="#sq"/></svg><svg class="i off"><use href="#bmv"/></svg><svg class="i off"><use href="#simp"/></svg><svg class="i off"><use href="#badd"/></svg><svg class="i off"><use href="#bpart"/></svg><svg class="i off"><use href="#badd"/></svg><svg class="i off"><use href="#bdel"/></svg><svg class="i off"><use href="#bpdel"/></svg><svg class="i off"><use href="#resh"/></svg><svg class="i off"><use href="#offc"/></svg><svg class="i off"><use href="#vmix"/></svg><span class="more">»</span><i class="hd"></i><svg class="i"><use href="#py"/></svg><svg class="i"><use href="#gcube"/></svg><svg class="i"><use href="#hammer"/></svg><svg class="i"><use href="#undob"/></svg><b class="dd"></b><svg class="i far"><use href="#earth"/></svg><i class="hd"></i><svg class="i"><use href="#chart"/></svg><i class="hd"></i><i class="hd"></i><svg class="i"><use href="#qms"/></svg><svg class="i"><use href="#osm"/></svg><i class="hd"></i><svg class="i"><use href="#dplot"/></svg>
</div>
<div class="bar">
<i class="hd first"></i><svg class="i"><use href="#dsm"/></svg><svg class="i"><use href="#gpkg"/></svg><svg class="i"><use href="#nvec"/></svg><svg class="i"><use href="#feather"/></svg><svg class="i"><use href="#chip"/></svg><i class="sep"></i><svg class="i"><use href="#virt"/></svg><i class="sep wide"></i><i class="hd"></i><svg class="i"><use href="#book"/></svg><i class="hd"></i><svg class="i"><use href="#sel"/></svg><b class="dd"></b><svg class="i"><use href="#selv"/></svg><b class="dd"></b><svg class="i"><use href="#desel"/></svg><b class="dd"></b><svg class="i"><use href="#selloc"/></svg><i class="hd"></i><svg class="i off"><use href="#curve"/></svg><b class="dd dim"></b><svg class="i off"><use href="#circ"/></svg><b class="dd dim"></b><svg class="i off"><use href="#ell"/></svg><b class="dd dim"></b><svg class="i off"><use href="#rec"/></svg><b class="dd dim"></b><svg class="i off"><use href="#poly"/></svg><b class="dd dim"></b><i class="hd slim"></i><svg class="i off"><use href="#pencils"/></svg><svg class="i"><use href="#pencil"/></svg><svg class="i off"><use href="#saveed"/></svg><svg class="i off"><use href="#baf"/></svg><svg class="i off"><use href="#vtx"/></svg><b class="dd dim"></b><svg class="i off"><use href="#multi"/></svg><svg class="i off"><use href="#trash"/></svg><svg class="i off"><use href="#cut"/></svg><svg class="i off"><use href="#copy"/></svg><svg class="i off"><use href="#paste"/></svg><svg class="i off"><use href="#undo"/></svg><svg class="i off"><use href="#redo"/></svg><i class="hd"></i><svg class="i"><use href="#magnet"/></svg><svg class="i off"><use href="#vmany"/></svg><svg class="i on down"><use href="#dots"/></svg>
<div class="spin snap"><span>12</span><em class="ud dimud"></em></div><div class="combo snapu"><span>px</span><b class="ar"></b></div>
<svg class="i"><use href="#topo"/></svg><svg class="i"><use href="#foot"/></svg><svg class="i off"><use href="#ix"/></svg><svg class="i off"><use href="#ix2"/></svg><b class="dd dim"></b><svg class="i off"><use href="#trace"/></svg>
</div>
<div class="bar thin"><i class="hd first"></i></div>

<main>
<section class="left">
<div class="dock"><span>Layers</span><svg><use href="#float"/></svg><svg><use href="#close"/></svg></div>
<div class="ltools"><svg class="press"><use href="#brush"/></svg><svg><use href="#addgrp"/></svg><svg><use href="#eye"/></svg><svg><use href="#filter"/></svg><svg><use href="#eps"/></svg><b class="dd"></b><svg><use href="#expd"/></svg><svg><use href="#coll"/></svg><svg><use href="#rem"/></svg></div>
<div class="tree">
<div class="row cur"><i class="exp"></i><i class="cb"><svg><use href="#check"/></svg></i><i class="sw sgray"></i><span class="act">Vietnam_provinces [63]</span></div>
<div class="row"><i class="exp"></i><i class="cb"></i><svg class="ric" viewBox="0 0 18 18"><circle cx="9" cy="9" r="7.200" fill="#fff" stroke="#e31a1c" stroke-width="1.700"/><path d="M9 4.500v9M4.500 9h9" stroke="#e31a1c" stroke-width="2.500"/></svg><span class="lyr">HCMC_clinics</span></div>
<div class="row"><i class="exp open"></i><i class="cb"></i><svg class="ric" viewBox="0 0 18 18"><path d="M1 1h16v16H1z" fill="#aecbe8"/><path d="M1 1h5v5H1zM12 1h5v5h-5zM6.500 6.500h5v5h-5zM1 12h5v5H1z" fill="#26364a"/><path d="M6 1h6v5H6zM12 12h5v5h-5z" fill="#dce9f6"/></svg><span class="lyr">HRSL_HCMC_Population</span></div>
<div class="row band"><span>Band 1: Population Count (Gray)</span></div>
<div class="row leg"><i class="c1"></i><span>&lt;= 32.3</span></div>
<div class="row leg"><i class="c2"></i><span>32.3 - 59.8</span></div>
<div class="row leg"><i class="c3"></i><span>59.8 - 87.4</span></div>
<div class="row leg"><i class="c4"></i><span>87.4 - 114.9</span></div>
<div class="row leg"><i class="c5"></i><span>&gt; 114.9</span></div>
<div class="row"><i class="exp"></i><i class="cb"></i><i class="sw spink"></i><span class="lyr">HCMC_border</span></div>
</div>
<div class="tabs"><span>Browser</span><span class="sel">Layers</span></div>
</section>

<i class="grip g1"></i>
<section class="canvas">
<svg viewBox="414 192 1072 804" width="1072" height="804">
<g class="land" transform="translate(560 200) scale(.33333)">
<path d="M677 957L664 948 656 935 645 920 641 908 632 914 615 902 600 886 585 870 570 855 560 850 552 835 545 822 545 808 540 800 530 795 525 780 515 778 508 782 498 770 482 762 480 750 469 742 472 728 480 718 474 708 455 700 440 694 420 692 400 680 385 668 370 662 355 648 340 640 325 630 310 628 293 617 305 608 320 600 326 590 320 578 320 568 340 563 355 563 357 570 370 567 385 573 400 572 407 560 425 552 432 543 434 530 447 520 450 505 438 497 420 487 398 482 402 470 398 460 412 460 405 453 390 455 385 462 370 465 365 453 380 443 395 433 410 430 418 435 400 420 380 405 365 395 355 388 335 382 322 380 310 386 290 388 280 395 276 410 266 422 250 413 238 403 220 405 205 397 185 388 170 372 155 358 150 345 140 335 150 328 150 310 160 298 163 280 162 268 145 270 142 257 137 270 122 278 115 262 113 250 100 238 90 222 75 208 60 195 50 182 43 173 55 168 65 155 75 140 85 128 92 120 110 127 130 137 145 140 155 158 170 165 182 155 192 140 205 132 212 115 225 118 232 132 243 142 247 135 250 122 260 118 272 130 288 145 305 157 313 150 315 130 330 115 345 110 350 122 365 130 380 115 400 108 425 106 433 95 427 72 440 65 455 55 475 50 488 48 500 32 512 45 525 55 535 68 533 77 550 77 565 85 580 95 600 90 620 88 635 100 655 105 675 97 690 100 705 107 715 115 708 128 700 145 685 150 682 165 680 175 693 182 697 200 697 215 700 232 715 236 730 240 748 240 745 252 760 258 775 265 790 275 795 290 810 283 825 288 845 288 860 280 875 290 893 300 885 312 865 318 850 320 835 330 830 345 815 358 800 370 780 380 760 385 740 393 725 395 718 400 712 405 710 415 700 425 688 432 683 445 683 460 685 475 680 487 660 488 645 495 630 510 615 523 603 525 595 535 590 550 575 570 570 590 567 618 562 630 555 645 545 655 545 670 548 680 560 690 563 705 570 718 585 740 605 765 625 770 645 788 660 795 672 815 662 822 662 835 672 855 685 875 700 893 720 910 740 928 725 938 710 958 690 958z"/>
<path class="in" d="M70 155L80 170 85 185 100 195 118 203 122 195 130 210 145 220 165 218 190 222 210 208 222 210 235 232 245 255 248 272 240 290 232 310 218 318 217 330 228 340 225 358 208 362 205 380 210 388 203 397M237 232L250 228 265 238 275 255 290 270 300 272 298 258 305 245M247 142L247 155 255 170 272 173 280 190 297 208 305 240 330 243 350 248 365 240 368 225 365 205 378 205 390 217 397 207 392 190 385 178 375 165 372 145 365 130M397 195L410 200 430 207 442 200 440 185 455 188 465 175 472 155 475 135 495 140 525 140 515 120 495 105 510 92 525 85 533 77M525 138L540 135 560 125 565 145 585 157 605 150 615 170 625 178 640 178 660 180 680 172M625 178L632 190 618 208 612 225 615 240 615 255 628 270 620 288 605 290 605 308 585 328M525 140L538 155 530 175 520 195 522 215 528 230 530 245 545 230 560 228 562 245 570 260 590 245 612 240M530 245L525 265 528 290 540 305 570 320 585 328M432 207L450 225 455 240 465 260 463 275 445 283 437 295 438 310 432 325M298 272L320 277 350 280 352 295 360 315 375 322 395 315 415 320 432 328M463 275L480 280 492 295 500 300 525 297M500 300L510 315 515 330 500 345 497 360 500 380M515 330L535 350 555 345 570 322M432 328L437 355 455 375 480 385 500 383 503 372 530 380 545 390 548 405 560 425 570 455M437 362L450 385 455 410 435 412 430 425M418 435L435 425 455 437 480 440 500 458 530 467 548 467 560 460 570 455M570 322L583 335 585 355 582 380 588 400 583 420 570 430 567 440 570 455 590 465 600 455M583 340L605 343 640 350 643 360 635 372 610 367 590 365 587 355M605 310L620 312 650 318 668 308 680 290 700 292 720 295 738 310 742 328 732 345 710 352 680 348 660 345 645 352M742 325L775 322 775 300 795 290M668 345L660 370 685 373 705 375 710 400M660 370L645 365 640 380 620 385 615 378 590 378 587 390M615 380L620 410 640 420 665 415 672 400 685 373M665 418L665 428 690 428M583 425L610 420 620 430 640 418M612 425L625 445 615 455 595 455 588 470M620 460L640 465 655 475 685 478M530 467L550 475 575 492 607 513M565 460L590 475 605 487 618 490 615 510 605 525M447 520L470 530 480 545 475 560 490 570 492 585 505 588 520 598 540 605 555 617 567 620M475 715L500 718 530 725 550 720 560 710M545 808L565 800 585 795 605 805 610 818 635 820 650 810 672 815"/>
<path class="blk" d="M728 400l12-7 12 4 4 10-8 8-12-2zM760 384l20-2 18-8 14-12 16-20 4 4-4 24-12 10-4 16-8 8-8-8-8 10-10-8-12 6-8-12z"/>
<path class="dot rag" d="M712 402l12 2M764 392l10 12 8-14 6 14 8-16 10 10 8-20 8 4 6-18M816 336l10-6 10 4 6-12 12-2 8-6M820 344l12-2 8-8 14-4 6-8 18-4 4-4M838 340l-8 10"/>
<path class="dot" d="M852 368l4-6 8 4M858 360l4-2M852 376l4 0M862 372h1M842 498l3-3M880 342h4M886 347h1M866 345h1M848 378h2M762 428h8M745 412h8M590 609l-9 4M574 615h1M565 690l2 6M561 700l4 4M577 698h0M592 692h1M655 792h8M789 927h1"/>
<path class="hole" d="M822 341l8-3M857 323l6-3M735 400l4 2M742 404h2M812 382l1 4M836 330l4-1"/>
</g>
<g class="land" transform="translate(640 480) scale(.33333)">
<path d="M582 715L573 700 572 680 578 660 592 635 592 612 585 598 578 580 568 570 568 548 555 542 552 525 560 510 558 488 572 482 578 460 578 430 585 415 570 402 572 395 588 395 590 375 588 345 575 335 572 325 555 325 548 308 540 300 533 285 537 275 560 265 566 252 560 245 545 245 535 235 525 232 515 213 500 208 495 195 485 178 478 182 475 192 462 192 455 180 450 168 438 160 437 115 450 118 470 118 485 98 500 88 515 98 530 120 555 150 580 170 605 185 630 202 650 212 665 228 672 240 682 250 686 262 700 270 712 295 725 315 745 330 750 342 762 338 770 350 778 365 777 385 785 410 800 440 800 455 808 480 815 500 820 530 828 555 830 575 820 588 828 605 828 630 833 670 845 685 853 700 850 710"/>
<path class="dot" d="M549 87h1M665 225l8 6M672 238l16 0M680 234l4 8M708 260l8 2 6 6M716 258h1M744 281h1M800 338l3 2M807 345h0M817 490h0M831 523h0M838 597h3M826 618l5 12M836 648v2M834 660h1"/>
</g>
<g class="land" transform="translate(620 700) scale(.33333)">
<path d="M905 47L890 60 880 75 890 90 885 105 875 110 880 130 882 150 880 165 885 178 882 200 878 215 870 228 852 232 850 262 840 268 825 265 812 275 805 290 785 290 770 310 750 325 720 327 708 340 708 355 690 355 665 370 640 378 625 390 600 398 575 405 560 400 550 400 535 405 530 415 530 435 515 450 512 470 505 485 500 505 495 520 480 525 460 518 455 535 440 552 420 560 392 567 360 582 330 597 325 620 310 635 290 655 265 663 235 660 235 652 245 652 240 635 258 632 245 628 247 580 250 520 255 482 270 475 285 465 282 450 270 445 255 440 245 430 230 430 220 437 212 430 210 410 195 400 210 385 225 380 245 383 255 372 278 360 290 350 280 330 288 320 300 328 320 328 335 318 355 320 385 310 395 325 405 333 412 328 425 338 440 338 442 318 440 308 425 298 405 285 398 265 400 235 390 225 398 215 418 215 420 203 445 208 470 215 482 215 480 175 505 175 520 170 530 160 550 158 570 148 592 128 605 123 620 132 635 122 642 100 642 48"/>
<path class="in" d="M592 128L597 165 612 175 615 190 622 203 603 210 602 225 610 233M622 203L645 195 660 185 675 195 685 190 700 197 718 185 705 165 703 150 720 143M805 128L808 150 800 170 800 205 803 215 788 232 800 240 825 265M808 150L820 160 830 180 850 185 870 195 880 200M610 233L630 245 637 262 670 265 700 262 715 280 740 262 745 240 775 240 790 235M483 215L483 240 500 250 510 258 528 245 535 260 553 268 580 245 610 233M483 240L468 255 468 275 480 290 478 310 442 318M480 290L500 305 520 325 538 330M553 268L550 280 555 290 535 305 538 330M637 262L635 285 622 305 640 325 640 345 625 360 612 345 590 350 580 362 562 362 555 368 540 365 528 352 538 330M562 365L558 400M640 345L642 375M478 315L490 330 492 350 500 362 522 368M528 355L525 375 525 395 530 405M335 320L355 340 380 360 405 380 430 380 455 373 475 378 485 390 525 397M300 328L315 345 325 360 350 380 355 395 345 412 320 425 305 432M345 412L370 430 385 440 400 432 412 415M405 380L405 395 392 405 400 415 430 412 470 410 500 418 530 430M412 415L430 415 450 430 455 445 435 462 415 470 400 465M375 435L390 450 410 468M245 385L260 400 290 420 305 432 325 450 350 467 385 465M430 412L455 440 470 455 490 465 505 485M410 468L430 490 445 505 460 518M350 467L335 485 325 500 318 515 350 517 380 510 395 492 400 470M352 517L355 540 390 548 392 567M318 515L310 545 310 585 330 597M250 525L280 522 310 545"/>
<path d="M105 407l12-3 10-10 10 5 5 14-3 20-6 18 2 18-7 2 3-22-4-22-6-14-8-4z"/>
<path class="blk" d="M893 68l10-4 4 8 8 2-4 10-6 6-6-6-8-4zM880 137l12 0 4 6-8 4zM178 495l8-4 4 16-6 4-6-8zM200 434l8 0 0 8-6 4z"/>
<path class="dot" d="M100 400l6 6M178 395v4M170 407l8 3M176 415v2M163 427h0M204 437l4 8M198 454h1M208 456h1M250 463h1M220 486h1M142 480h0M134 485h1M52 558l8-4M60 552l4 0M78 547h0M205 608l2 4M212 618h0M250 683l5 4M572 402l4 6M842 378v8M823 281h1M885 105l8 6M899 120h0M905 100h1M898 130h0M895 165v2M886 188v5M870 108l8 4M495 645h8M500 652h2M510 640v10M515 650h2M522 645h0M508 655h0M497 655h2M519 633h0M506 636h4"/>
</g>
<g class="land" transform="translate(640 480) scale(.33333)">
<path class="in" d="M555 150L550 168 530 168 512 178 518 188 505 195 500 208M560 245L575 252 600 248 620 243 628 228 645 228 668 226M620 243L640 250 642 262 665 265 686 260M590 343L605 362 630 370 645 378 643 392 662 405 668 392 685 390 688 358 715 350 750 342M680 392L700 415 718 430 720 455 735 465M570 547L590 535 600 512 620 510 635 500 650 505 660 495 685 485 698 470 698 458 715 462 735 465 752 458 755 445 780 442 798 450M735 465L742 500 752 520 755 550 765 575 765 600 780 612 800 605 820 588M765 605L750 605 750 615 762 618 765 635 770 655 758 665 750 680 745 687M592 637L610 630 640 632 665 627 680 635 695 637 710 660 722 680 742 685 765 700 788 715 788 725 815 713 850 708M582 715L605 717 625 715 635 740 630 755 642 768 645 790 660 803 685 798 705 790 745 787 745 765 772 760 770 745 788 725"/>
</g>
<g class="land" transform="translate(960 500) scale(.33333)">
<ellipse cx="871" cy="811" rx="17" ry="25"/><ellipse cx="878" cy="851" rx="8" ry="15" transform="rotate(20 878 851)"/><circle cx="629" cy="870" r="6"/><ellipse cx="648" cy="866" rx="8" ry="10" transform="rotate(-30 648 866)"/><circle cx="1019" cy="903" r="7.500"/><circle cx="1047" cy="902" r="4.500"/><ellipse cx="1093" cy="934" rx="4" ry="10"/><circle cx="492" cy="1020" r="9.500"/><path d="M308 1143l-1-9 12-20 10-2 5 8-12 14-6 8zM198 167l0-8 10-6 24-1 2 6-6 5-12-1-8 6zM182 37l12-4 2 4-6 4z"/><ellipse cx="577" cy="1146" rx="7" ry="9" transform="rotate(-40 577 1146)"/><ellipse cx="183" cy="1265" rx="6" ry="8" transform="rotate(30 183 1265)"/><path d="M252 1325l10-9 7 2-2 8-8 2zM885 1130l4-10 8-3 2 7-6 10z"/><circle cx="1026" cy="1009" r="6" class="blk"/><circle cx="801" cy="986" r="6"/><circle cx="769" cy="1071" r="5"/>
<path class="lw" d="M905 1016l12-38 34-16 8 12 14 6-14 12-12 14zM1000 972l2-20 34 2 0 16-6-2-2-10-18-2 0 14-8 2zM550 1397l16-14 12-2 18-26 16-4 8 8-16 10 4 8-8 14-14 0-16 10-18 2zM626 1331l16-4 18-4 4 8-6 4-10-4zM810 967l-2-20 6-8 6 16 0 12-6 4zM860 969l2-22 8-14 2 10-8 10zM898 1087l6 2 6 6 12 4-10 0-10-6zM926 944l0-14 6-4 0 14 8 4-8 2z"/>
<path class="lw nf" d="M200 128l2-8 6-6 10-4 10 10 2 6-6 4-6-2M592 1098l-6-6 4-10 14-2M610 1086l14-10 18-14M618 1074l12-2M440 1332l8-10 8-16M194 1414l12-8 20-18-2-12M878 940l14-8 14-4M940 940l8-12M946 938l12-4M920 1000l6-8 4 6 10-6M928 980l12 4M922 990l14-6M572 908l10-3 18-2M592 858l8-6 6-3M36 1324l12-4 10 0M325 190l8-4 14-3M328 191l14-5M536 1227l12 2 10 6M540 1231l14 0M818 1088l-1 14M528 1041v14M288 53l14 1 8 4"/>
<path class="dot" d="M192 129h2M200 130h0M309 73h0M353 111h0M366 98h1M370 106h0M256 145h12M229 186h2M145 225h3M560 926h1M596 956h4M610 961h3M622 957h0M633 948h0M650 914h0M663 893h0M697 903h0M677 933l5-3M600 1004h1M608 1003h0M617 1003h0M632 999h1M649 1007v5M580 1028l4 4M601 1031h0M643 1058v3M736 1030h2M746 1022h0M822 928h0M849 941h0M949 781h0M1074 909h0M1037 930v3M1039 942h0M1071 966h2M1028 1044h0M857 1041h0M860 1116h0M896 1139h1M969 1137h1M904 1178h0M933 1196h0M877 1217h1M756 1146v3M826 1157h2M403 1103h0M388 1116l6-5M502 1171h0M501 1208h4M643 1223h2M574 1241v6M598 1271l3 2M720 1293l11 2M769 1273h0M568 1333h0M534 1345l4 4 6 3M519 1398h6M542 1397h3M524 1432h0M393 1361h0M288 1221l8-1M300 1217h0M311 1212h0M342 1225l10 1M344 1228h6M381 1221h0M214 1248h0M249 1253h0M220 1356h0M222 1366h0M196 1396h0M60 1337v4M44 1334h3M39 1331h1M40 1371h5M594 1076h0M603 1073h0"/>
</g>
</svg>
</section>
<i class="grip"></i>

<section class="right">
<div class="dock"><span>Layer Styling</span><svg><use href="#float"/></svg><svg><use href="#close"/></svg></div>
<div class="combo big"><svg viewBox="0 0 20 14"><path d="M1 2q8-3 10 0t8-1q1 7-1 9-6-1-8 0-5 4-8 2-2-5-1-10z" fill="#eee" stroke="#777" stroke-width="1.300"/></svg><span>Vietnam_provinces</span><b class="ar"></b></div>
<div class="r2">
<div class="side"><div class="stop"><svg><use href="#brush2"/></svg></div><div class="dark"><svg><use href="#abc"/></svg><svg><use href="#mask"/></svg><svg><use href="#cube"/></svg><svg><use href="#diag"/></svg><svg><use href="#hist"/></svg></div></div>
<div class="body">
<div class="combo big sym"><svg viewBox="0 0 18 18"><path d="M1.500 1h13v4h-13zM4 7h13v4H4zM1.500 13h13v4h-13z" fill="#0fb55a" stroke="#174f2c"/></svg><span>Single Symbol</span><b class="ar"></b></div>
<div class="symrow"><i class="prev"></i><div class="stree"><div class="row cur"><i class="exp open"></i><i class="ssw sgray"></i><strong>Fill</strong></div><div class="row sub"><i class="ssw stan"></i><span>Simple Fill</span></div></div>
<div class="sbtns"><button><svg viewBox="0 0 18 18"><path d="M6 1h6v5h5v6h-5v5H6v-5H1V6h5z" fill="#fff" stroke="#4f8a54" stroke-width="1.400"/><path d="M9 4v10M4 9h10" stroke="#4f8a54" stroke-width="2"/></svg></button><button class="no"><svg viewBox="0 0 18 18"><path d="M9 2l8 13H1z" fill="#bbb" stroke="#888"/></svg></button><button class="no"><svg viewBox="0 0 18 18"><path d="M1 6h16v6H1z" fill="#fff" stroke="#b88"/><path d="M4 9h10" stroke="#b88" stroke-width="2"/></svg></button><button class="no"><svg viewBox="0 0 18 18"><path d="M9 16l8-13H1z" fill="#bbb" stroke="#888"/></svg></button><button class="no"><svg viewBox="0 0 18 18"><path d="M1 3v14h12M4 1h13v14H4z" fill="none" stroke="#888" stroke-width="1.500"/><rect x="11" y="10" width="7" height="7" rx="1" fill="#aaa385"/></svg></button><button class="no"><svg viewBox="0 0 18 18"><path d="M5 3q3-4 7 0v6" fill="none" stroke="#888" stroke-width="2"/><rect x="2" y="9" width="14" height="8" rx="1" fill="#b5a878"/></svg></button></div></div>
<hr>
<div class="f fcol"><label>Color</label><div class="colbtn"><i></i></div><div class="coldd"><b class="ar"></b></div></div>
<div class="f fop"><label>Opacity</label><div class="slider"><i></i></div><div class="spin"><span>100.0 %</span><em class="ud"></em></div><svg class="ddef" viewBox="0 0 26 18"><path d="M6 3L1 8.500 6 14z" fill="#777" stroke="#555"/><path d="M6.500 1h12v15h-12z" fill="#eee" stroke="#777" stroke-width="1.500"/><path d="M9 4.500h8M9 8.500h8M9 12.500h7" stroke="#777" stroke-width="1.500"/><path d="M16.500 13.500h9.500l-4.700 4.500z" fill="#444"/></svg></div>
<div class="f fun"><label>Unit</label><div class="combo"><span>Millimeters</span><b class="ar"></b></div></div>
<hr class="h2">
<div class="f fse"><div class="fav"><svg class="mg"><use href="#search"/></svg><span>Favorites</span><svg class="clr" viewBox="0 0 13 11"><path d="M4 0h9v11H4L0 5.500z" fill="#999"/><path d="M5.500 3l4.500 5M10 3L5.500 8" stroke="#fff" stroke-width="1.400"/></svg><b class="ar"></b></div><svg class="sty"><use href="#style"/></svg></div>
<div class="list"><div class="lmain"><div class="lh"><span>Name</span><span>Tags</span></div>
<div class="lr"><svg viewBox="0 0 24 24"><rect x="3" y="3" width="18" height="18" fill="url(#gMagma)" stroke="#111" stroke-width="1.600"/></svg><span>gradien...</span><span>Showcase</span></div>
<div class="lr"><svg viewBox="0 0 24 24"><rect x="3.500" y="3.500" width="17" height="17" fill="#969696"/></svg><span>gray 3 fill</span><span>Grayscale</span></div>
<div class="lr"><svg viewBox="0 0 24 24" class="ol"><rect x="3" y="3" width="18" height="18"/><path d="M4 16L16 4M13 21l8-8"/></svg><span>hashed ...</span><span>Grayscale</span></div>
<div class="lr"><svg viewBox="0 0 24 24" class="ol"><rect x="3" y="3" width="18" height="18"/><path d="M5 5l14 14M17 3l4 4"/></svg><span>hashed ...</span><span>Grayscale</span></div>
<div class="lr"><svg viewBox="0 0 24 24" class="ol"><rect x="3" y="3" width="18" height="18"/><path d="M4 4l16 16M4 17L17 4M13 21l8-8M16 3l5 5"/></svg><span>hashed ...</span><span>Grayscale</span></div>
<div class="lr"><svg viewBox="0 0 24 24"><rect x="3.500" y="3.500" width="17" height="17" rx=".5" fill="#fff" stroke="#377eb8" stroke-width="4.500"/></svg><span>outline ...</span><span>Colorful</span></div>
<div class="lr"><svg viewBox="0 0 24 24"><rect x="3.500" y="3.500" width="17" height="17" rx=".5" fill="#fff" stroke="#4daf4a" stroke-width="4.500"/></svg><span>outline ...</span><span>Colorful</span></div>
<div class="lr"><svg viewBox="0 0 24 24"><rect x="3.500" y="3.500" width="17" height="17" rx=".5" fill="#fff" stroke="#e41a1c" stroke-width="4.500"/></svg><span>outline ...</span><span>Colorful</span></div>
<div class="lr"><svg viewBox="0 0 24 24"><rect x="3.500" y="3" width="18" height="18" fill="#f6f6f6" stroke="#888" stroke-width="1.500"/><path d="M0 0h9v7H0z" fill="#4daf4a"/><circle cx="4" cy="7" r="4.600" fill="#e41a1c"/><circle cx="20" cy="7" r="4.600" fill="#e41a1c"/><circle cx="12" cy="19.500" r="4.600" fill="#4daf4a"/></svg><span>outline ...</span><span>Showcase</span></div>
<div class="lr"><svg viewBox="0 0 24 24" class="ol"><rect x="3" y="2" width="18" height="24"/><path d="M9 13h2M19 13h1.500M14 3h2" stroke-width="3"/></svg><span>pattern ...</span><span>Grayscale</span></div>
</div><div class="sb"><b class="au"></b><i></i><b class="ad"></b></div></div>
<div class="acts"><svg class="gridi" viewBox="0 0 18 18"><rect width="18" height="18" fill="#a9c6e6"/><path d="M2 2h3.500v3.500H2zM7.300 2h3.500v3.500H7.300zM12.500 2H16v3.500h-3.500zM2 7.300h3.500v3.500H2zM7.300 7.300h3.500v3.500H7.300zM12.500 7.300H16v3.500h-3.500zM2 12.500h3.500V16H2zM7.300 12.500h3.500V16H7.300zM12.500 12.500H16V16h-3.500z" fill="#5c88b8"/></svg><div class="lbtn"><svg><use href="#table"/></svg></div><button class="sv">Save Symbol...</button><button class="ad2">Advanced<b class="ar"></b></button></div>
<div class="lrend"><i></i><span>Layer Rendering</span></div>
<div class="bot"><button><svg><use href="#undo"/></svg></button><button><svg><use href="#redo"/></svg></button><i class="cb"><svg><use href="#check"/></svg></i><span>Live update</span><button class="apply">Apply</button></div>
</div></div>
</section>
</main>

<footer><div class="loc"><svg><use href="#search"/></svg><span>Type to locate (Ctrl+K)</span></div>
<label class="w1">Coordinate</label><div class="fld f1">106.56,23.69</div><svg class="s1"><use href="#extent"/></svg><label class="w2">Scale</label><div class="fld f2">1:9034231<b class="ar"></b></div><svg class="s2"><use href="#lock"/></svg><label class="w3">Magnifier</label><div class="spin f3"><span>100%</span><em class="ud"></em></div><label class="w4">Rotation</label><div class="spin f4"><span>0.0 °</span><em class="ud"></em></div><i class="cb"><svg><use href="#check"/></svg></i><label class="w5">Render</label><svg class="s3"><use href="#globe"/></svg><label class="w6">EPSG:4326</label><svg class="s4"><use href="#bubble"/></svg><svg class="s5"><use href="#puzzle"/></svg></footer>
</body>
</html>
```
FILE: styles.css
```css
* { box-sizing: border-box; }
body { margin: 0; width: 1920px; height: 1030px; overflow: hidden; background: #efefef; color: #000; font: 13px/16px "Noto Sans", sans-serif; display: flex; flex-direction: column; }
svg { display: block; flex: none; }
.defs { display: none; }
.grads { position: absolute; width: 0; height: 0; }
i, em { font-style: normal; }

.titlebar { height: 29px; background: #fff; display: flex; align-items: center; padding-left: 2px; color: #8a8a8a; font: 14px "Open Sans", sans-serif; }
.logo { width: 20px; height: 22px; }
.wtitle { margin-left: 5px; letter-spacing: .13px; }
.winbtns { margin-left: auto; display: flex; gap: 45px; padding-right: 24px; }
.winbtns svg { width: 14px; height: 18px; }
.menubar { height: 25px; flex: none; background: #efefef; border-bottom: 1px solid #cfcfcf; display: flex; align-items: center; gap: 15.500px; padding-left: 11px; font: 14px "Open Sans", sans-serif; color: #969696; }
.menubar u { text-underline-offset: 2px; }

.bar { height: 39px; flex: none; display: flex; align-items: center; background: linear-gradient(#fafafa, #eee); border-bottom: 1px solid #b4b4b4; }
.bar.thin { height: 18px; }
.i { width: 24px; height: 24px; margin: 0 4.5px; overflow: visible; }
.i.off { opacity: .33; filter: grayscale(.7); }
.i.on { width: 32px; height: 31px; margin: 0 .5px; padding: 3px; border: 1px solid #aaa; border-radius: 3px; background: #dcdcdc; }
.i.down { width: 31px; margin: 0 1px; border-color: #bbb; }
.i.far { margin-left: 38px; margin-right: 4px; }
.hd { width: 18px; height: 17px; flex: none; background: radial-gradient(circle, #aaa .6px, transparent .9px) 6px 0 / 3.4px 3px; background-clip: content-box; padding: 0 4px 0 7px; }
.hd.first { width: 13.500px; padding: 0 2.500px 0 4px; }
.hd.slim { width: 14.500px; padding: 0 2px 0 5px; }
.sep { width: 7px; height: 24px; flex: none; border-left: 1px solid #ccc; }
.sep.wide { width: 17px; margin-left: 4px; }
.dd { width: 15.400px; flex: none; display: flex; justify-content: center; }
.dd::after, .ar::after { content: ""; border: solid transparent; border-width: 5px 4.500px 0; border-top-color: #4d4d4d; }
.dd.dim::after { border-top-color: #a0a0a0; }
.more { width: 43.500px; padding-left: 30.500px; font-size: 18px; }
.ar { margin-left: auto; margin-right: 9px; display: flex; }

.combo, .colbtn, .coldd, button { border: 1px solid #aaa; border-radius: 3px; background: linear-gradient(#fff, #ececec); display: flex; align-items: center; }
button { font: 13px "Noto Sans", sans-serif; padding: 0; justify-content: center; }
.spin, .fld, .fav { border: 1px solid #aaa; border-radius: 3px; background: #fff; display: flex; align-items: center; height: 23px; padding-left: 4px; }
.ud { margin-left: auto; width: 17px; height: 100%; border-left: 1px solid #aaa; display: flex; flex-direction: column; justify-content: center; align-items: center; gap: 4px; background: #f8f8f8; }
.ud::before, .ud::after { content: ""; border: solid transparent; border-width: 0 4px 5px; border-bottom-color: #555; }
.ud::after { border-width: 5px 4px 0; border-top-color: #555; }
.snap { width: 90px; margin: 0 2px 0 1px; background: #f0f0f0; color: #888; }
.snapu { width: 100px; height: 24px; padding-left: 4px; color: #888; }
.snapu .ar::after { border-top-color: #aaa; }
.dimud { opacity: .6; }

main { flex: none; height: 811px; display: flex; }
.left { width: 406px; display: flex; flex-direction: column; }
.dock { height: 23px; display: flex; align-items: center; padding-left: 4px; font: 14.500px "Open Sans", sans-serif; }
.dock svg { width: 12px; height: 12px; margin: 0 2px 3px 0; }
.dock svg:first-of-type { margin-left: auto; }
.ltools { height: 28px; display: flex; align-items: center; padding: 0 0 3px 4px; gap: 8.100px; }
.ltools svg { width: 17px; height: 17px; }
.ltools svg.press { width: 24px; height: 23px; padding: 3px; border: 1px solid #aaa; border-radius: 3px; background: #dcdcdc; margin-right: -2px; }
.ltools .dd { width: 10px; margin: 0 2px 0 0; }
.tree { height: 728px; border: 1px solid #b4b4b4; background: #fff; font: 14.200px "Open Sans", sans-serif; }
.row { height: 22px; display: flex; align-items: center; }
.row.cur { background: #efefef; }
.exp { width: 28px; display: flex; justify-content: center; padding-right: 4px; }
.exp.open::after { content: ""; border: solid transparent; border-width: 5px 4.500px 0; border-top-color: #555; }
.cb { width: 17px; height: 17px; border: 1px solid #b8b8b8; background: #fff; flex: none; }
.cb svg { width: 15px; height: 15px; }
.sw { width: 19px; height: 19px; border: 1px solid #555; margin: 0 6px 0 6px; }
.sgray { background: #a0a79e; border-color: #3f5f70; }
.spink { background: #f3e0d6; }
.ric { width: 18px; height: 18px; margin: 0 7px 0 7px; }
.act { font-weight: 700; text-decoration: underline; letter-spacing: .1px; }
.lyr { font-weight: 700; font-style: italic; color: #808080; font-size: 14.600px; letter-spacing: .42px; }
.band { height: 20px; padding-left: 53px; }
.leg { letter-spacing: .1px; }
.leg i { width: 17px; height: 17px; margin: 0 6px 0 53px; }
.c1 { background: #fde725; } .c2 { background: #5dc963; } .c3 { background: #21908d; } .c4 { background: #3b528b; } .c5 { background: #440154; }
.tabs { display: flex; height: 29px; align-items: flex-start; }
.tabs span { height: 27px; width: 77px; background: #dcdcdc; border: 1px solid #bbb; border-top: 0; display: flex; align-items: center; justify-content: center; font-size: 12.500px; padding-top: 2px; }
.tabs .sel { height: 29px; width: 67px; background: #fff; }
.grip { width: 8px; background: radial-gradient(circle, #999 .6px, transparent .9px) 3px 397px / 4px 3px no-repeat, radial-gradient(circle, #999 .6px, transparent .9px) 3px 401px / 4px 3px no-repeat, radial-gradient(circle, #999 .6px, transparent .9px) 3px 405px / 4px 3px no-repeat, radial-gradient(circle, #999 .6px, transparent .9px) 3px 409px / 4px 3px no-repeat; }
.grip.g1 { width: 7px; }
.canvas { width: 1074px; height: 808px; margin-top: 1px; background: #fff; border: 1px solid #b0b0b0; }
.canvas svg { margin-top: 1px; }
.land { fill: #e7bd86; stroke: #232323; stroke-width: 3.600; stroke-linejoin: round; stroke-linecap: round; }
.land .in, .land .nf { fill: none; }
.land .lw { stroke-width: 4.400; stroke-dasharray: 14 1.500; }
.land path.lw:not(.nf) { fill: #fff; }
.land .dot { stroke-width: 6.500; fill: none; }
.land .rag { stroke-width: 5; stroke-dasharray: 5 4; }
.land .blk { fill: #232323; }
.land .hole { stroke: #ccc; stroke-width: 3; }

.right { width: 425px; padding: 0 3px 0 2px; display: flex; flex-direction: column; }
.right .dock { padding-left: 1px; }
.right .dock svg { margin-right: 2px; }
.right .dock svg + svg { margin-right: -1px; }
.big { height: 28px; padding-left: 6px; }
.big > svg { width: 20px; height: 14px; margin-right: 2px; }
.big .ar { margin-right: 10px; }
.sym > svg { width: 18px; height: 18px; margin-right: 4px; }
.r2 { display: flex; gap: 3px; padding-top: 7px; }
.side { width: 38px; }
.stop { height: 32px; padding: 5px 0 0 6px; }
.stop svg { width: 24px; height: 22px; }
.dark { height: 716px; background: #5e5e5e; padding: 7px 0 0 4px; display: flex; flex-direction: column; gap: 10px; }
.dark svg { width: 23px; height: 22px; }
.body { width: 379px; }
.symrow { display: flex; height: 182px; padding-top: 7px; }
.prev { width: 61px; height: 61px; margin: 54px 26px 0 20px; background: #e7bd86; border: 1px solid #232323; }
.stree { width: 192px; height: 168px; border: 1px solid #b4b4b4; background: #fff; font: 14.200px "Open Sans", sans-serif; }
.ssw { width: 17px; height: 17px; border: 1px solid #555; margin-right: 6px; }
.stan { background: #e7bd86; }
.sub { padding-left: 53px; }
.sbtns { display: grid; grid-template-columns: 33px 33px; grid-auto-rows: 27px; gap: 11px 7px; margin: 7px 0 0 7px; align-content: start; }
.sbtns svg { width: 18px; height: 18px; }
.no { border-color: #c8c8c8; } .no svg { opacity: .4; }
hr { margin: 0; border: 0; border-top: 1px solid #999; height: 10px; }
.f { display: flex; align-items: center; width: 368px; }
.f label { width: 49px; font-size: 12.500px; padding-top: 1px; }
.f span { padding-top: 1px; }
.fcol { height: 26px; }
.colbtn { width: 303px; height: 26px; padding: 3px 4px; }
.colbtn i { flex: 1; height: 20px; border-radius: 3px; background: #e7bd86; }
.coldd { width: 15px; height: 26px; margin-left: 1px; } .coldd .ar { margin: auto; }
.fop { height: 42px; }
.slider { width: 177px; height: 6px; border: 1px solid #aaa; border-radius: 2px; background: #f4f4f4; display: flex; align-items: center; justify-content: flex-end; }
.slider i { width: 16px; height: 16px; border: 1px solid #999; border-radius: 3px; background: #fff; flex: none; }
.fop .spin { width: 100px; margin-left: 3px; }
.ddef { width: 26px; height: 18px; margin-left: 10px; }
.fun { height: 24px; } .fun .combo { width: 319px; height: 24px; padding-left: 4px; font-size: 12.500px; }
.h2 { width: 368px; margin-top: 4px; height: 8px; }
.fse { height: 24px; }
.fav { width: 334px; height: 24px; padding-left: 10px; font-size: 12.500px; }
.fav svg.mg { width: 13px; height: 13px; margin-right: 6px; }
.clr { width: 13px; height: 11px; margin-left: auto; }
.fav .ar { margin: 0 10px 0 14px; }
.sty { width: 19px; height: 19px; margin-left: 11px; }
.list { display: flex; width: 368px; height: 280px; margin-top: 6px; border: 1px solid #b4b4b4; background: #fff; font: 14.200px "Open Sans", sans-serif; overflow: hidden; }
.lmain { width: 349px; }
.lh { height: 24px; display: flex; align-items: center; background: linear-gradient(#fff, #efefef); border-bottom: 1px solid #b4b4b4; }
.lh span { width: 125px; padding-left: 2px; height: 23px; line-height: 24px; border-right: 1px solid #ccc; }
.lh span + span { border: 0; }
.lr { display: flex; align-items: center; height: 26px; letter-spacing: -.1px; }
.lr svg { width: 24px; height: 24px; margin: 0 6px 0 28px; }
.lr span { width: 70px; white-space: nowrap; }
.ol { fill: #fff; stroke: #000; stroke-width: 1.800; }
.sb { width: 17px; border-left: 1px solid #b4b4b4; background: #e8e8e8; display: flex; flex-direction: column; }
.sb b { height: 16px; background: #fafafa; display: flex; align-items: center; justify-content: center; flex: none; }
.sb b::after { content: ""; border: solid transparent; border-width: 5px 5px 0; border-top-color: #555; }
.sb .au::after { border-width: 0 5px 5px; border-bottom-color: #555; }
.sb i { height: 158px; background: #fafafa; border: solid #b4b4b4; border-width: 1px 0; margin-bottom: auto; }
.sb .ad { border-top: 1px solid #b4b4b4; }
.acts { display: flex; width: 368px; padding-top: 6px; }
.gridi { width: 18px; height: 18px; margin: 5px 5px 0 5px; }
.lbtn { width: 28px; height: 27px; border: 1px solid #aaa; border-radius: 3px; background: #dedede; padding: 3px 4px; }
.lbtn svg { width: 18px; height: 19px; }
.acts button { height: 25px; margin-top: 1px; font-size: 12.500px; padding-top: 1px; }
.acts .sv { width: 94px; margin-left: auto; }
.acts .ad2 { width: 80px; margin-left: 6px; } .ad2 .ar { margin: 0 0 0 6px; }
.lrend { display: flex; align-items: center; height: 54px; padding-top: 14px; font-weight: 700; font-size: 12.800px; }
.lrend i { border: solid transparent; border-width: 5.500px 0 5.500px 7px; border-left-color: #333; margin: 0 10px 0 5px; }
.bot { display: flex; align-items: center; height: 28px; font-size: 12.500px; }
.bot button { width: 28px; height: 27px; margin: -1px 6px 0 0; }
.bot button svg { width: 18px; height: 18px; }
.bot .cb { margin: -1px 6px 0 131px; }
.bot .apply { width: 80px; height: 25px; margin: 0 0 0 auto; font-size: 13px; }

footer { flex: 1; display: flex; align-items: center; font-size: 12.400px; }
.loc { width: 232px; height: 23px; margin: 0 773px 0 4px; border: 1px solid #aaa; border-radius: 3px; background: #fff; display: flex; align-items: center; color: #808080; padding-left: 8px; gap: 7px; letter-spacing: .1px; }
.loc svg { width: 13px; height: 13px; }
footer label { white-space: nowrap; flex: none; }
footer .ar { margin-right: 7px; }
.w1 { width: 65px; } .f1 { width: 89px; padding-left: 5px; } .s1 { width: 20px; height: 22px; margin: 0 11px 0 5px; }
.w2 { width: 34px; } .f2 { width: 92px; padding-left: 3px; } .s2 { width: 16px; height: 20px; margin: 0 9px 0 14px; }
.w3 { width: 57px; } .f3 { width: 92px; }
.w4 { width: 66px; padding-left: 9px; } .f4 { width: 88px; margin-right: 7px; }
.w5 { width: 63px; padding-left: 6px; } .s3 { width: 20px; height: 20px; margin-right: 4px; }
.w6 { width: 83px; letter-spacing: .1px; } .s4 { width: 22px; height: 20px; margin-right: 12px; } .s5 { width: 22px; height: 20px; }
```
